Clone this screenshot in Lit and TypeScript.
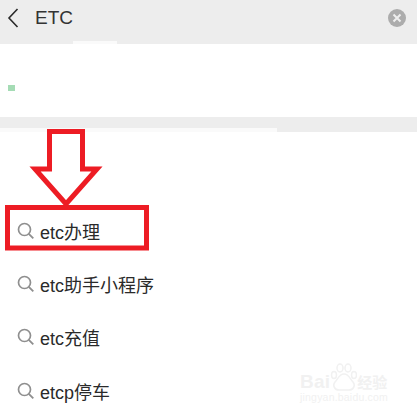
import { LitElement, html, css, svg } from "lit";
import { customElement } from "lit/decorators.js";

const rows = ["etc办理", "etc助手小程序", "etc充值", "etcp停车"];

@customElement("app-root")
export class AppRoot extends LitElement {
  static styles = css`
    :host {
      display: block;
      position: relative;
      width: 417px;
      height: 415px;
      overflow: hidden;
      background: #fff;
      font-family: "Liberation Sans", "Noto Sans CJK SC", sans-serif;
      color: #222;
    }
    .header {
      height: 44px;
      box-sizing: border-box;
      background: #ededed;
      display: flex;
      align-items: center;
      padding: 0 11px 8px 7px;
    }
    .back { width: 12px; height: 20px; }
    .query {
      margin-left: 16px;
      font-size: 19px;
      color: #333;
      flex: 1;
    }
    .clear { width: 18px; height: 18px; }
    .card {
      height: 73px;
      background: #fff;
      display: flex;
      flex-direction: column;
      justify-content: center;
      padding-left: 8px;
      box-sizing: border-box;
    }
    .smudge { width: 7px; height: 6px; background: #8fd3a2; margin-top: 14px; opacity: .8; }
    .band {
      height: 11px;
      background: #ededed;
    }
    .fade {
      height: 4px;
      background: linear-gradient(90deg, #fafafa 0 66.4%, #ededed 66.4%);
    }
    .list {
      padding-top: 72px;
      display: flex;
      flex-direction: column;
    }
    .row {
      height: 53.3px;
      display: flex;
      align-items: center;
      padding-left: 17px;
      gap: 6px;
      font-size: 18px;
      color: #2a2a2a;
    }
    .mag { width: 17px; height: 17px; flex: none; margin-top: -1px; }
    .overlay { position: absolute; left: 0; top: 0; pointer-events: none; }
    .patch { position: absolute; left: 73px; top: 41px; width: 44px; height: 3px; background: #fafafa; }
    .mark {
      position: absolute;
      left: 300px;
      top: 372px;
      color: #f1f1f1;
      font-size: 10.500px;
      letter-spacing: .2px;
    }
    .mark .top { font-size: 19px; font-weight: 700; display: flex; align-items: flex-end; line-height: 19px; }
    .mark .paw { width: 27px; height: 28px; margin: -10px 0 0 0; }
    .mark .cn { font-size: 15px; line-height: 17px; }
  `;

  render() {
    return html`
      <div class="header">
        <svg class="back" viewBox="0 0 12 20"><path d="M10.500 1 2 10l8.500 9" fill="none" stroke="#2a2a2a" stroke-width="1.600"/></svg>
        <div class="query">ETC</div>
        <svg class="clear" viewBox="0 0 18 18">
          <circle cx="9" cy="9" r="9" fill="#acacac"/>
          <path d="M5.500 5.500l7 7M12.500 5.500l-7 7" stroke="#eee" stroke-width="2"/>
        </svg>
      </div>
      <div class="patch"></div>
      <div class="card"><div class="smudge"></div></div>
      <div class="band"></div>
      <div class="fade"></div>
      <div class="list">
        ${rows.map(
          (r) => html`<div class="row">
            <svg class="mag" viewBox="0 0 17 17">
              <circle cx="7.500" cy="7.500" r="6" fill="none" stroke="#8f8f8f" stroke-width="1.700"/>
              <path d="M11.800 11.800 16.300 16.300" stroke="#8f8f8f" stroke-width="1.900"/>
            </svg>
            <span>${r}</span>
          </div>`
        )}
      </div>
      <svg class="overlay" width="417" height="415" viewBox="0 0 417 415">
        ${svg`<path d="M49.500 131.500H82.500V169H97L66 204 35 169H49.500Z" fill="none" stroke="#ed1c24" stroke-width="5"/>
        <rect x="7.500" y="207.500" width="139" height="40.500" fill="none" stroke="#ed1c24" stroke-width="5"/>`}
      </svg>
      <div class="mark">
        <div class="top">Bai<svg class="paw" viewBox="0 0 27 28" fill="none" stroke="#f1f1f1" stroke-width="1.500">
          <ellipse cx="4" cy="12" rx="2.500" ry="3.500"/>
          <ellipse cx="10" cy="5" rx="3" ry="4"/>
          <ellipse cx="18" cy="5" rx="3" ry="4"/>
          <ellipse cx="24" cy="12" rx="2.500" ry="3.500"/>
          <path d="M14 11C9 11 8 16 5 19c-3 4 0 8 4 8h10c4 0 7-4 4-8-3-3-4-8-9-8Z"/>
        </svg><span class="cn">经验</span></div>
        <div>jingyan.baidu.com</div>
      </div>
    `;
  }
}
